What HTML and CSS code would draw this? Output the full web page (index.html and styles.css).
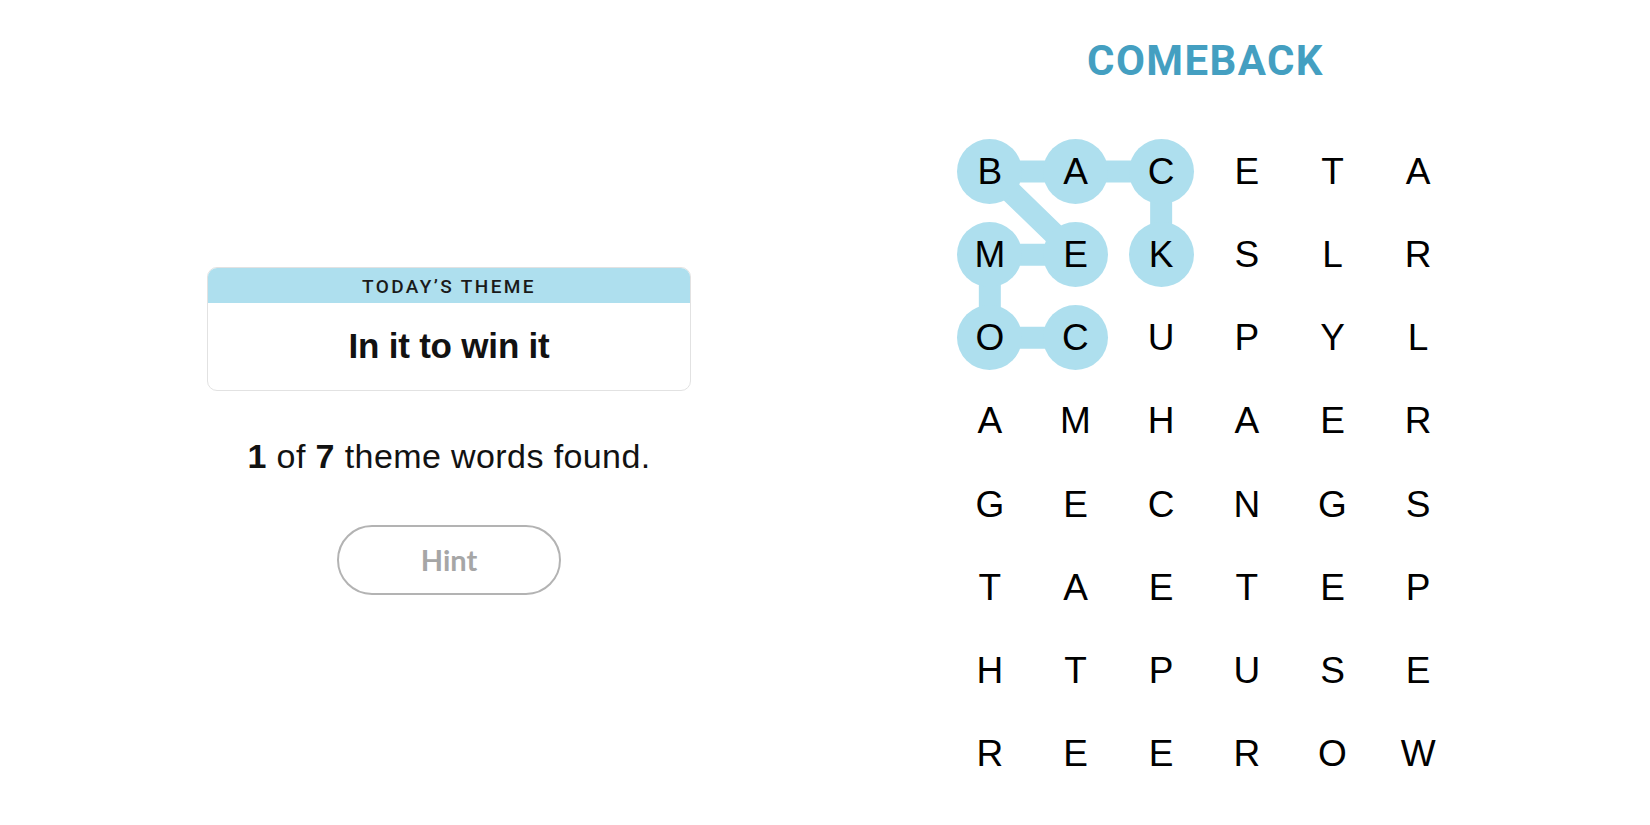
FILE: index.html
```html
<!DOCTYPE html>
<html lang="en">
<head>
<meta charset="utf-8">
<title>Strands</title>
<link rel="stylesheet" href="styles.css">
</head>
<body>
<main class="page">
  <section class="left">
    <div class="theme-card">
      <div class="theme-head">TODAY’S THEME</div>
      <div class="theme-body">In it to win it</div>
    </div>
    <p class="progress"><b>1</b> of <b>7</b> theme words found.</p>
    <button class="hint" type="button">Hint</button>
  </section>
  <section class="right">
    <h1 class="current">COMEBACK</h1>
    <div class="board">
      <svg class="links" viewBox="0 0 514 665" width="514" height="665" aria-hidden="true">
        <g stroke="#aedfee" stroke-width="22" stroke-linecap="round">
          <line x1="42.83" y1="41.55" x2="128.49" y2="41.55"/>
          <line x1="128.49" y1="41.55" x2="214.15" y2="41.55"/>
          <line x1="214.15" y1="41.55" x2="214.15" y2="124.65"/>
          <line x1="42.83" y1="41.55" x2="128.49" y2="124.65"/>
          <line x1="42.83" y1="124.65" x2="128.49" y2="124.65"/>
          <line x1="42.83" y1="124.65" x2="42.83" y2="207.75"/>
          <line x1="42.83" y1="207.75" x2="128.49" y2="207.75"/>
        </g>
      </svg>
      <div class="cell"><span class="ltr sel">B</span></div>
      <div class="cell"><span class="ltr sel">A</span></div>
      <div class="cell"><span class="ltr sel">C</span></div>
      <div class="cell"><span class="ltr">E</span></div>
      <div class="cell"><span class="ltr">T</span></div>
      <div class="cell"><span class="ltr">A</span></div>

      <div class="cell"><span class="ltr sel">M</span></div>
      <div class="cell"><span class="ltr sel">E</span></div>
      <div class="cell"><span class="ltr sel">K</span></div>
      <div class="cell"><span class="ltr">S</span></div>
      <div class="cell"><span class="ltr">L</span></div>
      <div class="cell"><span class="ltr">R</span></div>

      <div class="cell"><span class="ltr sel">O</span></div>
      <div class="cell"><span class="ltr sel">C</span></div>
      <div class="cell"><span class="ltr">U</span></div>
      <div class="cell"><span class="ltr">P</span></div>
      <div class="cell"><span class="ltr">Y</span></div>
      <div class="cell"><span class="ltr">L</span></div>

      <div class="cell"><span class="ltr">A</span></div>
      <div class="cell"><span class="ltr">M</span></div>
      <div class="cell"><span class="ltr">H</span></div>
      <div class="cell"><span class="ltr">A</span></div>
      <div class="cell"><span class="ltr">E</span></div>
      <div class="cell"><span class="ltr">R</span></div>

      <div class="cell"><span class="ltr">G</span></div>
      <div class="cell"><span class="ltr">E</span></div>
      <div class="cell"><span class="ltr">C</span></div>
      <div class="cell"><span class="ltr">N</span></div>
      <div class="cell"><span class="ltr">G</span></div>
      <div class="cell"><span class="ltr">S</span></div>

      <div class="cell"><span class="ltr">T</span></div>
      <div class="cell"><span class="ltr">A</span></div>
      <div class="cell"><span class="ltr">E</span></div>
      <div class="cell"><span class="ltr">T</span></div>
      <div class="cell"><span class="ltr">E</span></div>
      <div class="cell"><span class="ltr">P</span></div>

      <div class="cell"><span class="ltr">H</span></div>
      <div class="cell"><span class="ltr">T</span></div>
      <div class="cell"><span class="ltr">P</span></div>
      <div class="cell"><span class="ltr">U</span></div>
      <div class="cell"><span class="ltr">S</span></div>
      <div class="cell"><span class="ltr">E</span></div>

      <div class="cell"><span class="ltr">R</span></div>
      <div class="cell"><span class="ltr">E</span></div>
      <div class="cell"><span class="ltr">E</span></div>
      <div class="cell"><span class="ltr">R</span></div>
      <div class="cell"><span class="ltr">O</span></div>
      <div class="cell"><span class="ltr">W</span></div>
    </div>
  </section>
</main>
</body>
</html>
```

FILE: styles.css
```css
* { box-sizing: border-box; }

html, body {
  margin: 0;
  padding: 0;
  background: #ffffff;
}

body {
  font-family: "Liberation Sans", Arial, sans-serif;
  color: #121212;
  width: 1650px;
  height: 825px;
  overflow: hidden;
}

.page {
  display: flex;
  align-items: flex-start;
}

.left {
  width: 484px;
  margin-left: 207px;
  padding-top: 267px;
  display: flex;
  flex-direction: column;
  align-items: center;
}

.theme-card {
  width: 484px;
  height: 124px;
  border: 1px solid #e2e2e2;
  border-radius: 10px;
  overflow: hidden;
  display: flex;
  flex-direction: column;
}

.theme-head {
  height: 36px;
  margin: -1px -1px 0;
  background: #aedfee;
  display: flex;
  align-items: center;
  justify-content: center;
  font-family: Roboto, "Liberation Sans", sans-serif;
  font-weight: 500;
  font-size: 19px;
  letter-spacing: 2.4px;
  color: #1a1a1a;
  padding-top: 2px;
}

.theme-body {
  flex: 1;
  display: flex;
  align-items: center;
  justify-content: center;
  font-family: "Liberation Sans", Arial, sans-serif;
  font-weight: 700;
  font-size: 35px;
  letter-spacing: -0.2px;
  color: #121212;
  padding-bottom: 2px;
}

.progress {
  margin: 45px 0 0;
  font-size: 34px;
  line-height: 1.2;
  letter-spacing: 0.4px;
  color: #121212;
}

.progress b { font-weight: 700; }

.hint {
  margin-top: 48px;
  width: 224px;
  height: 70px;
  border: 2px solid #b3b3b3;
  border-radius: 35px;
  background: #ffffff;
  font-family: Lato, "Liberation Sans", sans-serif;
  font-weight: 700;
  font-size: 29px;
  color: #a6a6a6;
  padding: 0;
}

.right {
  margin-left: 256px;
  width: 514px;
  padding-top: 40px;
  display: flex;
  flex-direction: column;
  align-items: center;
}

.current {
  margin: 0 0 48px;
  font-family: Roboto, "Liberation Sans", sans-serif;
  font-weight: 700;
  font-size: 42px;
  line-height: 1;
  letter-spacing: 1.4px;
  color: #449fc1;
  padding-left: 3px;
}

.board {
  position: relative;
  width: 514px;
  height: 665px;
  display: grid;
  grid-template-columns: repeat(6, 1fr);
  grid-template-rows: repeat(8, 1fr);
}

.links {
  position: absolute;
  left: 0;
  top: 0;
  z-index: 0;
}

.cell {
  position: relative;
  z-index: 1;
  display: flex;
  align-items: center;
  justify-content: center;
}

.ltr {
  width: 65px;
  height: 65px;
  border-radius: 50%;
  display: flex;
  align-items: center;
  justify-content: center;
  font-family: "Liberation Sans", Arial, sans-serif;
  font-size: 37px;
  line-height: 1;
  color: #000000;
}

.ltr.sel {
  background: #aedfee;
}
```
